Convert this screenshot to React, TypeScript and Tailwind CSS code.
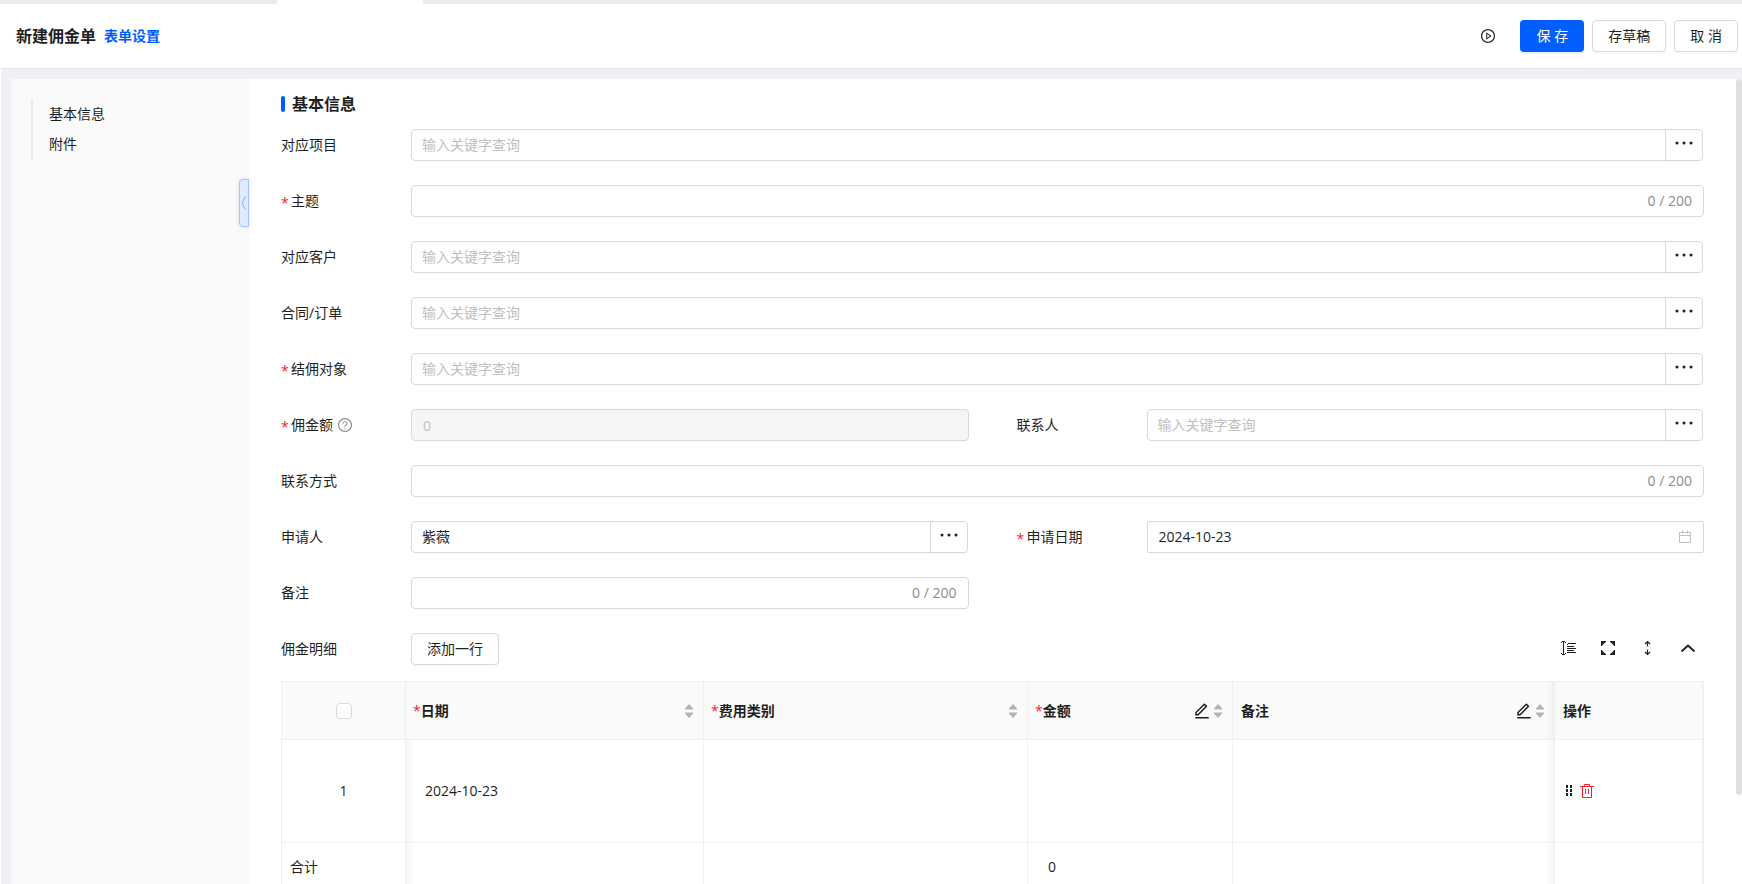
import type { ReactNode } from 'react'
import { AiOutlinePlayCircle, AiOutlineQuestionCircle } from 'react-icons/ai'
import { RiEditLine } from 'react-icons/ri'

const LOOKUP_PLACEHOLDER = '输入关键字查询'

const sections = ['基本信息', '附件']

interface FieldProps {
  id: string
  label: string
  required?: boolean
  help?: boolean
  wide?: boolean
  children: ReactNode
}

function Field({ id, label, required, help, wide, children }: FieldProps) {
  return (
    <div className={wide ? 'col-span-2 flex items-center' : 'flex items-center'}>
      <div className="flex w-[130px] shrink-0 items-center">
        <label htmlFor={id} className="flex items-center">
          {required && <span className="mr-[3px] w-[7px] pt-1 text-sm leading-4 text-[#f5222d]">*</span>}
          {label}
        </label>
        {help && <AiOutlineQuestionCircle className="ml-1 text-base text-[#8c8c8c]" />}
      </div>
      <div className="flex min-w-0 flex-1">{children}</div>
    </div>
  )
}

function LookupInput({ id, value }: { id: string; value?: string }) {
  return (
    <div className="flex h-8 min-w-0 flex-1 pr-px">
      <input
        id={id}
        type="text"
        defaultValue={value}
        placeholder={LOOKUP_PLACEHOLDER}
        className="min-w-0 flex-1 rounded-l border border-[#d9d9d9] bg-white px-[10px] outline-none placeholder:text-[#bfbfbf]"
      />
      <button
        type="button"
        aria-label="选择"
        className="-ml-px flex w-[38px] items-center justify-center rounded-r border border-[#d9d9d9] bg-white pb-1 shadow-[0_2px_0_rgba(0,0,0,0.02)]"
      >
        <svg width="18" height="4" viewBox="0 0 18 4" fill="currentColor">
          <circle cx="2" cy="2" r="1.5" />
          <circle cx="9" cy="2" r="1.5" />
          <circle cx="16" cy="2" r="1.5" />
        </svg>
      </button>
    </div>
  )
}

function CountedInput({ id }: { id: string }) {
  return (
    <div className="flex h-8 min-w-0 flex-1 items-center rounded border border-[#d9d9d9] bg-white px-[11px]">
      <input id={id} type="text" maxLength={200} className="min-w-0 flex-1 outline-none" />
      <span className="text-[#8c8c8c]">0 / 200</span>
    </div>
  )
}

function LineHeightIcon() {
  return (
    <svg width="16" height="16" viewBox="0 0 16 16" fill="currentColor" shapeRendering="crispEdges">
      <path d="M3 1h1v14H3zM2 1h3v1H2zM1 2h1v1H1zM5 2h1v1H5zM2 14h3v1H2zM1 13h1v1H1zM5 13h1v1H5z" />
      <path d="M8 3h8v1H8zM7 4h1v1H7zM7 6h7v1H7zM7 8h9v1H7zM7 10h7v1H7zM7 12h9v1H7z" />
    </svg>
  )
}

function ExpandIcon() {
  return (
    <svg width="16" height="16" viewBox="0 0 16 16" fill="currentColor">
      <path d="M1 1h5v1L4.500 3L3 4.500L2 6H1zM15 1v5h-1L13 4.500L11.500 3L10 2V1zM1 15v-5h1l1 1.500L4.500 13L6 14v1zM15 15h-5v-1l1.500-1l1.500-1.500l1-1.500h1z" />
    </svg>
  )
}

function UpDownIcon() {
  return (
    <svg width="16" height="16" viewBox="0 0 16 16" fill="none" stroke="currentColor" strokeWidth="1.2">
      <path d="M7.500 1.500v5M7.500 9.500v5M5 4L7.500 1.500L10 4M5 12L7.500 14.500L10 12" />
    </svg>
  )
}

function ChevronUpIcon() {
  return (
    <svg width="16" height="16" viewBox="0 0 16 16" fill="none" stroke="currentColor" strokeWidth="1.8">
      <path d="M1.500 11.500L8 5.500l6.500 6" />
    </svg>
  )
}

function CalendarIcon() {
  return (
    <svg width="14" height="14" viewBox="0 0 14 14" fill="none" stroke="#bfbfbf" strokeWidth="1">
      <path d="M1.500 2.500h11v10h-11zM1.500 5.500h11M4.500 0.500v3M9.500 0.500v3" />
    </svg>
  )
}

function TrashIcon() {
  return (
    <svg width="14" height="14" viewBox="0 0 14 14" fill="none" stroke="currentColor" strokeWidth="1">
      <path d="M0 2.500h14M2.500 2.500v11h9v-11M4.500 2V0.500h5V2M5.500 5v5M8.500 5v5" />
    </svg>
  )
}

function SortIcon() {
  return (
    <svg width="8" height="14" viewBox="0 0 8 14" fill="#b3b3b3">
      <path d="M4 0l4 4.500V5.500H0V4.500zM4 14l4-4.500V8.500H0v1z" />
    </svg>
  )
}

interface HeadCellProps {
  title: string
  required?: boolean
  editable?: boolean
  last?: boolean
}

function HeadCell({ title, required, editable, last }: HeadCellProps) {
  return (
    <th
      scope="col"
      className={
        last
          ? 'border-r border-b border-[#f0f0f0] pr-[10px] pl-2 text-left font-bold shadow-[inset_-10px_0_8px_-8px_rgba(5,5,5,0.06)]'
          : 'border-r border-b border-[#f0f0f0] pr-[10px] pl-[7px] text-left font-bold'
      }
    >
      <div className="flex items-center">
        <span className="flex-1">
          {required && <span className="font-normal text-[#f5222d]">*</span>}
          {title}
        </span>
        {editable && (
          <button type="button" aria-label={`批量编辑${title}`} className="mr-[3px]">
            <RiEditLine className="text-lg" />
          </button>
        )}
        <button type="button" aria-label={`按${title}排序`}>
          <SortIcon />
        </button>
      </div>
    </th>
  )
}

function DetailTable() {
  const cell = 'border-r border-b border-[#f0f0f0]'
  const afterFixed = 'border-r border-b border-[#f0f0f0] pl-[19px] shadow-[inset_10px_0_8px_-8px_rgba(5,5,5,0.06)]'
  const beforeFixed = 'border-r border-b border-[#f0f0f0] shadow-[inset_-10px_0_8px_-8px_rgba(5,5,5,0.06)]'

  return (
    <table className="w-full table-fixed border-separate border-spacing-0 border-t border-r border-l border-[#f0f0f0]">
      <colgroup>
        <col className="w-[124px]" />
        <col className="w-[298px]" />
        <col className="w-[324px]" />
        <col className="w-[205px]" />
        <col />
        <col className="w-[148px]" />
      </colgroup>
      <thead>
        <tr className="h-[58px] bg-[#fafafa]">
          <th className={cell}>
            <input
              type="checkbox"
              aria-label="全选"
              className="mx-auto block size-4 appearance-none rounded border border-[#d9d9d9] bg-white"
            />
          </th>
          <HeadCell title="日期" required />
          <HeadCell title="费用类别" required />
          <HeadCell title="金额" required editable />
          <HeadCell title="备注" editable last />
          <th scope="col" className={`${cell} pl-2 text-left font-bold`}>操作</th>
        </tr>
      </thead>
      <tbody>
        <tr className="h-[103px]">
          <td className={`${cell} text-center`}>1</td>
          <td className={afterFixed}>2024-10-23</td>
          <td className={cell}></td>
          <td className={cell}></td>
          <td className={beforeFixed}></td>
          <td className={`${cell} pl-[11px]`}>
            <div className="flex items-center gap-2">
              <button type="button" aria-label="拖动排序">
                <svg width="6" height="12" viewBox="0 0 6 12" fill="currentColor" shapeRendering="crispEdges">
                  <path d="M0 0h2v3H0zM4 0h2v3H4zM0 4h2v3H0zM4 4h2v3H4zM0 8h2v3H0zM4 8h2v3H4z" />
                </svg>
              </button>
              <button type="button" aria-label="删除" className="text-[#f5222d]">
                <TrashIcon />
              </button>
            </div>
          </td>
        </tr>
      </tbody>
      <tfoot>
        <tr className="h-[49px]">
          <td className={`${cell} pl-2`}>合计</td>
          <td className={afterFixed}></td>
          <td className={cell}></td>
          <td className={`${cell} pl-5`}>0</td>
          <td className={beforeFixed}></td>
          <td className={cell}></td>
        </tr>
      </tfoot>
    </table>
  )
}

export default function App() {
  const defaultButton =
    'h-8 rounded border border-[#d9d9d9] bg-white px-[15px] shadow-[0_2px_0_rgba(0,0,0,0.02)]'

  return (
    <div className="flex h-screen flex-col overflow-hidden bg-white font-['Open_Sans','Noto_Sans_CJK_SC',sans-serif] text-sm text-[#1f1f1f]">
      {/* Edge of the tab bar */}
      <div className="h-1 shrink-0 bg-[#ebebeb]">
        <div className="ml-[277px] h-full w-[146px] bg-white" />
      </div>

      <header className="flex h-[65px] shrink-0 items-center border-b border-[#e5e5e5] pr-1 pl-4">
        <h1 className="text-base font-bold">新建佣金单</h1>
        <a href="#settings" className="ml-2 font-bold text-[#005eff]">表单设置</a>
        <div className="ml-auto flex items-center gap-2">
          <button type="button" aria-label="播放引导" className="mr-4">
            <AiOutlinePlayCircle className="text-base" />
          </button>
          <button type="button" className="h-8 w-16 rounded bg-[#005eff] text-white shadow-[0_2px_0_rgba(5,95,255,0.08)]">
            保 存
          </button>
          <button type="button" className={defaultButton}>存草稿</button>
          <button type="button" className={defaultButton}>取 消</button>
        </div>
      </header>

      <div className="ml-px flex min-h-0 flex-1 bg-[#f0f1f5] pt-[10px] pl-[10px]">
        <aside className="relative w-[238px] shrink-0 bg-[#fafafa] pt-5 pl-5">
          <nav className="border-l-2 border-[#ebebeb] pl-4">
            {sections.map(name => (
              <a key={name} href={`#${name}`} className="block leading-[30px]">{name}</a>
            ))}
          </nav>
          <button
            type="button"
            aria-label="收起目录"
            className="absolute top-[100px] right-0 flex h-12 w-[10px] items-center justify-center rounded-l border border-[#a3c5ff] bg-[#e0ebff] shadow-[0_0_4px_rgba(0,0,0,0.12)]"
          >
            <svg width="6" height="14" viewBox="0 0 6 14" fill="none" stroke="#94bbff" strokeWidth="1.2">
              <path d="M4.500 0.500L1.500 6v2l3 5.500" />
            </svg>
          </button>
        </aside>

        <main className="min-w-0 flex-1 overflow-y-auto bg-white px-8 pt-[13px] [scrollbar-width:none]">
          <h2 className="flex h-6 items-center text-base font-bold">
            <span className="mr-[7px] h-4 w-1 rounded-xs bg-[#005eff]" />
            基本信息
          </h2>

          <form className="mt-[13px] grid grid-cols-2 gap-x-12 gap-y-6">
            <Field id="project" label="对应项目" wide>
              <LookupInput id="project" />
            </Field>
            <Field id="subject" label="主题" required wide>
              <CountedInput id="subject" />
            </Field>
            <Field id="customer" label="对应客户" wide>
              <LookupInput id="customer" />
            </Field>
            <Field id="contract" label="合同/订单" wide>
              <LookupInput id="contract" />
            </Field>
            <Field id="payee" label="结佣对象" required wide>
              <LookupInput id="payee" />
            </Field>
            <Field id="amount" label="佣金额" required help>
              <input
                id="amount"
                type="text"
                value="0"
                disabled
                className="h-8 min-w-0 flex-1 rounded border border-[#d9d9d9] bg-[#f5f5f5] px-[11px] text-[#bfbfbf]"
              />
            </Field>
            <Field id="contact" label="联系人">
              <LookupInput id="contact" />
            </Field>
            <Field id="contact-info" label="联系方式" wide>
              <CountedInput id="contact-info" />
            </Field>
            <Field id="applicant" label="申请人">
              <LookupInput id="applicant" value="紫薇" />
            </Field>
            <Field id="apply-date" label="申请日期" required>
              <div className="flex h-8 min-w-0 flex-1 items-center rounded-xs border border-[#d9d9d9] bg-white px-[11px]">
                <input id="apply-date" type="text" defaultValue="2024-10-23" className="min-w-0 flex-1 outline-none" />
                <CalendarIcon />
              </div>
            </Field>
            <Field id="remark" label="备注">
              <CountedInput id="remark" />
            </Field>
            <Field id="add-row" label="佣金明细" wide>
              <button id="add-row" type="button" className={defaultButton}>添加一行</button>
              <div className="ml-auto flex items-center gap-6 pr-2 pb-0.5">
                <button type="button" aria-label="行高"><LineHeightIcon /></button>
                <button type="button" aria-label="全屏"><ExpandIcon /></button>
                <button type="button" aria-label="展开"><UpDownIcon /></button>
                <button type="button" aria-label="收起"><ChevronUpIcon /></button>
              </div>
            </Field>
          </form>

          <div className="mt-4">
            <DetailTable />
          </div>
        </main>

        {/* Scroll track */}
        <div className="w-[6px] shrink-0 bg-white">
          <div className="h-[89%] rounded bg-[#e0e0e0]" />
        </div>
      </div>
    </div>
  )
}
